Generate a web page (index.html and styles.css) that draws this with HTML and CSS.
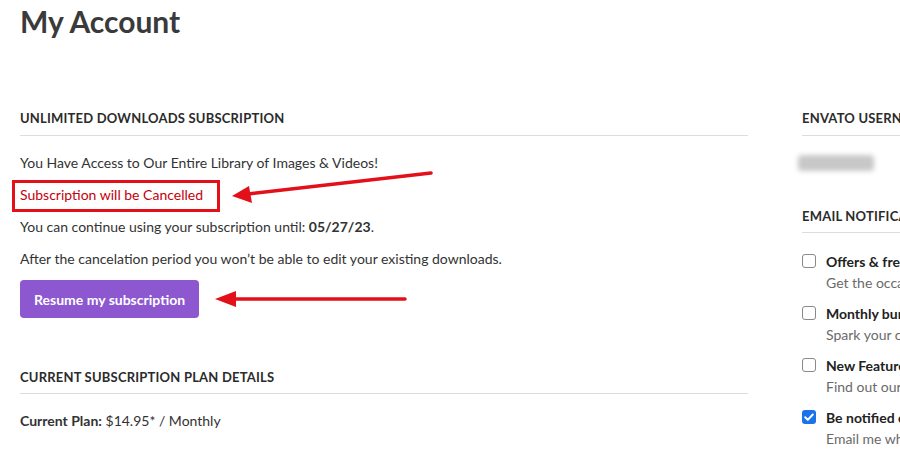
FILE: index.html
```html
<!DOCTYPE html>
<html lang="en">
<head>
    <meta charset="UTF-8">
    <meta name="viewport" content="width=device-width, initial-scale=1.0">
    <title>My Account</title>
    <link rel="stylesheet" href="styles.css">
</head>
<body>
    <div class="page">
        <h1>My Account</h1>

        <div class="columns">
            <!-- Columna principal -->
            <div class="main">
                <section class="block">
                    <h2>Unlimited Downloads Subscription</h2>
                    <p class="first">You Have Access to Our Entire Library of Images &amp; Videos!</p>
                    <p class="cancelled">Subscription will be Cancelled</p>
                    <p>You can continue using your subscription until: <strong>05/27/23</strong>.</p>
                    <p>After the cancelation period you won’t be able to edit your existing downloads.</p>
                    <button class="btn">Resume my subscription</button>
                </section>

                <section class="block plan">
                    <h2>Current Subscription Plan Details</h2>
                    <p class="first"><strong>Current Plan:</strong> $14.95* / Monthly</p>
                </section>
            </div>

            <!-- Columna lateral -->
            <div class="side">
                <section class="block">
                    <h2>Envato Username</h2>
                    <div class="blurred"></div>
                </section>

                <section class="block notifications">
                    <h2>Email Notifications</h2>
                    <label class="option">
                        <span class="box"></span>
                        <span class="option-text">
                            <strong>Offers &amp; free stuff</strong>
                            <span class="desc">Get the occasional special offer</span>
                        </span>
                    </label>
                    <label class="option">
                        <span class="box"></span>
                        <span class="option-text">
                            <strong>Monthly bundles</strong>
                            <span class="desc">Spark your creativity</span>
                        </span>
                    </label>
                    <label class="option">
                        <span class="box"></span>
                        <span class="option-text">
                            <strong>New Features</strong>
                            <span class="desc">Find out our latest news</span>
                        </span>
                    </label>
                    <label class="option">
                        <span class="box checked">
                            <svg viewBox="0 0 14 14" width="14" height="14"><path d="M3.2 7.3l2.6 2.6 5-5.4" fill="none" stroke="#fff" stroke-width="2" stroke-linecap="round" stroke-linejoin="round"/></svg>
                        </span>
                        <span class="option-text">
                            <strong>Be notified of updates</strong>
                            <span class="desc">Email me when items are updated</span>
                        </span>
                    </label>
                </section>
            </div>
        </div>
    </div>

    <!-- Anotaciones sobre la captura -->
    <svg class="annotations" width="900" height="452" viewBox="0 0 900 452">
        <rect x="13.5" y="181.5" width="205" height="29" fill="none" stroke="#e3101a" stroke-width="3"/>
        <line x1="431" y1="173" x2="248" y2="194" stroke="#e3101a" stroke-width="3.5" stroke-linecap="round"/>
        <polygon points="232,196 249,186 252,203" fill="#e3101a"/>
        <line x1="405" y1="299" x2="232" y2="299" stroke="#e3101a" stroke-width="3.5" stroke-linecap="round"/>
        <polygon points="215,299 236,291 236,307" fill="#e3101a"/>
    </svg>
</body>
</html>
```

FILE: styles.css
```css
/* Estilos generales */
body {
    margin: 0;
    font-family: Lato, "Open Sans", sans-serif;
    font-size: 14px;
    color: #333;
    background-color: #fff;
    overflow: hidden;
}
.page {
    padding: 1px 20px 0;
    width: 1100px;
}
h1 {
    margin: 0;
    font-size: 30px;
    line-height: 40px;
    font-weight: 700;
    color: #3a3a3a;
}
.columns {
    display: grid;
    grid-template-columns: 728px 300px;
    column-gap: 54px;
    margin-top: 67px;
}
h2 {
    margin: 0;
    padding-bottom: 7px;
    border-bottom: 1px solid #ddd;
    font-size: 13px;
    line-height: 20px;
    font-weight: 700;
    letter-spacing: 0.2px;
    text-transform: uppercase;
    color: #2b2b2b;
}
p {
    margin: 12px 0 0;
    line-height: 20px;
}
p.first {
    margin-top: 17px;
}
.cancelled {
    color: #c4000b;
}
.btn {
    display: block;
    margin-top: 11px;
    height: 38px;
    padding: 0 14px;
    border: none;
    border-radius: 4px;
    background-color: #8d57d0;
    color: #fff;
    font-family: inherit;
    font-size: 14px;
    font-weight: 700;
    cursor: pointer;
}
.plan {
    margin-top: 49px;
}
.plan h2 {
    padding-bottom: 6px;
}
.blurred {
    margin: 19px 0 0 -4px;
    width: 76px;
    height: 16px;
    background-color: #c8c8c8;
    border-radius: 4px;
    filter: blur(2.5px);
}
.notifications {
    margin-top: 35px;
}
.notifications h2 {
    padding-bottom: 6px;
}
.option {
    display: flex;
    gap: 10px;
    margin-top: 10px;
    line-height: 21px;
}
.notifications .option:first-of-type {
    margin-top: 18px;
}
.box {
    flex: none;
    width: 12px;
    height: 12px;
    margin-top: 3px;
    border: 1px solid #888;
    border-radius: 3px;
    background-color: #fff;
}
.box.checked {
    width: 14px;
    height: 14px;
    border: none;
    background-color: #1a73e8;
}
.box svg {
    display: block;
}
.option-text {
    display: flex;
    flex-direction: column;
    white-space: nowrap;
}
.option-text strong {
    color: #222;
}
.desc {
    color: #6a6a6a;
}
.annotations {
    position: absolute;
    left: 0;
    top: 0;
    pointer-events: none;
}
```
